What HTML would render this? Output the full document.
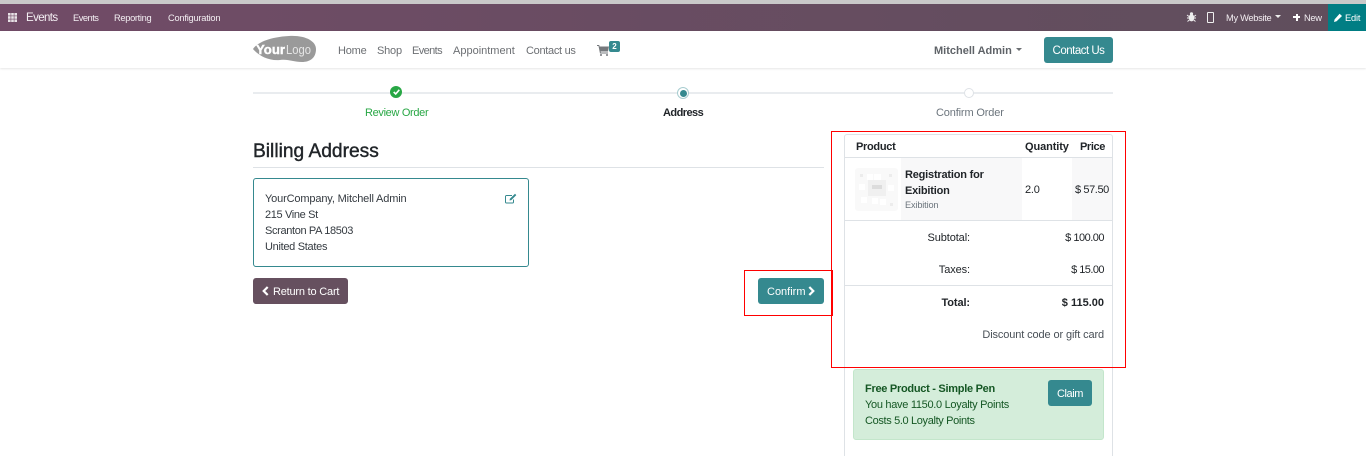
<!DOCTYPE html>
<html><head><meta charset="utf-8"><title>Billing Address</title>
<style>
html,body{margin:0;padding:0;background:#fff;height:456px;overflow:hidden}
body{width:1366px;position:relative;font-family:"Liberation Sans",sans-serif;font-size:11px;color:#212529}
.a{position:absolute;white-space:nowrap}
.t{position:absolute;white-space:nowrap;line-height:16px;height:16px;margin-top:1px}
.r{text-align:right}
.btn{position:absolute;border-radius:3px;color:#fff;text-align:center;box-sizing:border-box}
svg{position:absolute;overflow:visible}
</style></head><body>
<div class="a" style="left:0;top:0;width:1366px;height:4px;background:#c9c9c9"></div>
<div class="a" style="left:0;top:4px;width:1366px;height:27px;background:linear-gradient(90deg,#714b67,#5f4e5c)"></div>
<svg style="left:8px;top:13px" width="10" height="10" viewBox="0 0 10 10" fill="#e8e2e6"><rect width="2.6" height="2.6"/><rect x="3.2" width="2.6" height="2.6"/><rect x="6.4" width="2.6" height="2.6"/><rect y="3.2" width="2.6" height="2.6"/><rect x="3.2" y="3.2" width="2.6" height="2.6"/><rect x="6.4" y="3.2" width="2.6" height="2.6"/><rect y="6.4" width="2.6" height="2.6"/><rect x="3.2" y="6.4" width="2.6" height="2.6"/><rect x="6.4" y="6.4" width="2.6" height="2.6"/></svg>
<div class="t" style="left:26px;top:9px;color:#f3eef2;font-size:11.5px;letter-spacing:-.6px">Events</div>
<div class="t" style="left:73px;top:9px;color:#f3eef2;font-size:9.3px;letter-spacing:-.5px">Events</div>
<div class="t" style="left:114px;top:9px;color:#f3eef2;font-size:9.3px;letter-spacing:-.33px">Reporting</div>
<div class="t" style="left:168px;top:9px;color:#f3eef2;font-size:9.3px;letter-spacing:-.23px">Configuration</div>
<svg style="left:1187px;top:12px" width="9" height="10" viewBox="0 0 9 10" fill="#eee"><ellipse cx="4.5" cy="5.8" rx="2.8" ry="3.6"/><circle cx="4.5" cy="1.8" r="1.6"/><path d="M0 3l2 1.5M9 3L7 4.5M0 6h2M9 6H7M.5 9.5L2.3 8M8.5 9.5L6.7 8" stroke="#eee" fill="none"/></svg>
<div class="a" style="left:1207px;top:12px;width:7px;height:11px;box-sizing:border-box;border:1.4px solid #eee;border-radius:1px"></div>
<div class="t" style="left:1226px;top:9px;color:#f3eef2;font-size:9.3px;letter-spacing:-.3px">My Website</div>
<div class="a" style="left:1275px;top:15px;border:3px solid transparent;border-top:3.5px solid #eee;border-bottom:0"></div>
<div class="a" style="left:1293px;top:16px;width:7px;height:2px;background:#fff"></div>
<div class="a" style="left:1295.5px;top:13.5px;width:2px;height:7px;background:#fff"></div>
<div class="t" style="left:1304px;top:9px;color:#f3eef2;font-size:9.3px;letter-spacing:-.3px">New</div>
<div class="a" style="left:1328px;top:4px;width:38px;height:27px;background:#017e84"></div>
<svg style="left:1334px;top:13px" width="8" height="9" viewBox="0 0 8 9"><path d="M0 9l.6-2.6L5.6.8 8 3 2.6 8.2z" fill="#fff"/></svg>
<div class="t" style="left:1345px;top:9px;color:#fff;font-size:9.3px;letter-spacing:-.2px">Edit</div>

<div class="a" style="left:0;top:31px;width:1366px;height:37px;background:#fff;box-shadow:0 1px 2px rgba(0,0,0,.1)"></div>
<svg style="left:253px;top:36px" width="64" height="28" viewBox="0 0 64 28"><path d="M0 13C4 7 16 1 36 0c16-1 27 5 27 13 0 9-6 13-14 13-9 0-13-3-22-2C16 25 6 20 0 13z" fill="#9a9a9a"/><text x="3" y="18" font-family="Liberation Sans" font-weight="bold" font-size="12.5" fill="#fff" stroke="#fff" stroke-width=".4" textLength="29" lengthAdjust="spacingAndGlyphs">Your</text><text x="33" y="18" font-family="Liberation Sans" font-size="13" fill="#e6e6e6" textLength="25" lengthAdjust="spacingAndGlyphs">Logo</text></svg>
<div class="t" style="left:338px;top:42px;color:#6c6f73;letter-spacing:-.2px">Home</div>
<div class="t" style="left:377px;top:42px;color:#6c6f73;letter-spacing:-.2px">Shop</div>
<div class="t" style="left:412px;top:42px;color:#6c6f73;letter-spacing:-.6px">Events</div>
<div class="t" style="left:453px;top:42px;color:#6c6f73">Appointment</div>
<div class="t" style="left:526px;top:42px;color:#6c6f73;letter-spacing:-.3px">Contact us</div>
<svg style="left:597px;top:45px" width="12" height="11" viewBox="0 0 12 11" fill="#75787c"><path d="M0 0h2.2l.4 1.5H12l-1 5H3.6l.2 1H11v1H3L1.5 1H0z"/><circle cx="4" cy="10" r="1"/><circle cx="10" cy="10" r="1"/></svg>
<div class="a" style="left:609px;top:41px;width:11px;height:11px;background:#35898f;border-radius:2px;color:#fff;font-size:8px;font-weight:bold;text-align:center;line-height:11px">2</div>
<div class="t" style="left:934px;top:42px;color:#5f6368;font-weight:bold">Mitchell Admin</div>
<div class="a" style="left:1016px;top:48px;border:3px solid transparent;border-top:3.5px solid #6c6f73;border-bottom:0"></div>
<div class="btn" style="left:1044px;top:37px;width:69px;height:26px;background:#35898f;line-height:28px;font-size:11.5px;letter-spacing:-.5px">Contact Us</div>

<div class="a" style="left:253px;top:92px;width:860px;height:2px;background:#e9ecef"></div>
<div class="a" style="left:390px;top:86px;width:12px;height:12px;border-radius:50%;background:#28a745"></div>
<svg style="left:392.5px;top:89px" width="7" height="6" viewBox="0 0 7 6"><path d="M.7 3l2 2L6.3.8" fill="none" stroke="#fff" stroke-width="1.6"/></svg>
<div class="a" style="left:677px;top:87px;width:10px;height:10px;border-radius:50%;background:#fff;border:1px solid #a8cdd0"></div>
<div class="a" style="left:679.5px;top:89.5px;width:7px;height:7px;border-radius:50%;background:#35898f"></div>
<div class="a" style="left:964px;top:88px;width:8px;height:8px;border-radius:50%;background:#fff;border:1px solid #dee2e6"></div>
<div class="t" style="left:365px;top:104px;color:#28a745;letter-spacing:-.33px">Review Order</div>
<div class="t" style="left:663px;top:104px;color:#212529;font-weight:bold;letter-spacing:-.55px">Address</div>
<div class="t" style="left:936px;top:104px;color:#6c757d;letter-spacing:-.15px">Confirm Order</div>

<div class="a" style="left:253px;top:140px;font-size:19.2px;line-height:24px;color:#212529;-webkit-text-stroke:.4px #212529">Billing Address</div>
<div class="a" style="left:253px;top:167px;width:571px;height:1px;background:#dee2e6"></div>
<div class="a" style="left:253px;top:178px;width:276px;height:89px;box-sizing:border-box;border:1px solid #35898f;border-radius:3px"></div>
<div class="t" style="left:265px;top:190px;color:#343a40;letter-spacing:-.15px">YourCompany, Mitchell Admin</div>
<div class="t" style="left:265px;top:206px;color:#343a40;letter-spacing:-.35px">215 Vine St</div>
<div class="t" style="left:265px;top:222px;color:#343a40;letter-spacing:-.35px">Scranton PA 18503</div>
<div class="t" style="left:265px;top:238px;color:#343a40;letter-spacing:-.3px">United States</div>
<svg style="left:505px;top:193px" width="12" height="11" viewBox="0 0 12 11" fill="none" stroke="#35898f" stroke-width="1"><path d="M8.5 6.5V9a1 1 0 0 1-1 1H1.5a1 1 0 0 1-1-1V3.5a1 1 0 0 1 1-1H7"/><path d="M4.5 7.5l.4-1.8L10 .8l1.3 1.3-5 5z" fill="#35898f" stroke="none"/></svg>
<div class="btn" style="left:253px;top:278px;width:95px;height:26px;background:#66505f;line-height:26px"><svg style="left:9px;top:8px" width="7" height="10" viewBox="0 0 7 10"><path d="M5.7 1L1.7 5l4 4" fill="none" stroke="#fff" stroke-width="2.2"/></svg><span class="t" style="left:20px;top:5px;letter-spacing:-.2px">Return to Cart</span></div>
<div class="btn" style="left:758px;top:278px;width:66px;height:26px;background:#35898f;line-height:26px"><span class="t" style="left:9px;top:5px">Confirm</span><svg style="left:50px;top:8px" width="7" height="10" viewBox="0 0 7 10"><path d="M1.3 1l4 4-4 4" fill="none" stroke="#fff" stroke-width="2.2"/></svg></div>

<div class="a" style="left:844px;top:134px;width:269px;height:322px;box-sizing:border-box;border:1px solid #dee2e6;border-bottom:0;border-radius:3px 3px 0 0"></div>
<div class="a" style="left:845px;top:157px;width:267px;height:1px;background:#dee2e6"></div>
<div class="a" style="left:901px;top:158px;width:121px;height:62px;background:#f8f8f9"></div>
<div class="a" style="left:1072px;top:158px;width:40px;height:62px;background:#f8f8f9"></div>
<div class="a" style="left:845px;top:220px;width:267px;height:1px;background:#dee2e6"></div>
<div class="a" style="left:845px;top:285px;width:267px;height:1px;background:#dee2e6"></div>
<div class="a" style="left:855px;top:168px;width:43px;height:43px;background:#f9f9f9;border-radius:3px"></div>
<svg style="left:855px;top:168px" width="43" height="43" viewBox="0 0 43 43"><rect x="13" y="12" width="18" height="16" fill="#f0f0f0"/><rect x="17" y="17" width="10" height="4" fill="#dcdcdc"/><g fill="#fff"><rect x="12" y="6" width="6" height="6"/><rect x="19" y="6" width="7" height="6"/><rect x="4" y="16" width="6" height="6"/><rect x="33" y="17" width="6" height="6"/><rect x="6" y="29" width="6" height="6"/><rect x="17" y="30" width="6" height="6"/><rect x="25" y="31" width="6" height="6"/></g><g fill="#ececec"><rect x="5" y="6" width="3" height="3"/><rect x="34" y="6" width="3" height="3"/><rect x="35" y="35" width="3" height="3"/></g></svg>
<div class="t" style="left:856px;top:138px;font-weight:bold;letter-spacing:-.3px">Product</div>
<div class="t" style="left:1025px;top:138px;font-weight:bold;letter-spacing:-.1px">Quantity</div>
<div class="t" style="left:1080px;top:138px;font-weight:bold;letter-spacing:-.4px">Price</div>
<div class="t" style="left:905px;top:166px;font-weight:bold;letter-spacing:-.2px">Registration for</div>
<div class="t" style="left:905px;top:182px;font-weight:bold;letter-spacing:-.2px">Exibition</div>
<div class="t" style="left:905px;top:196px;font-size:9.2px;color:#6c757d;letter-spacing:-.15px">Exibition</div>
<div class="t" style="left:1025px;top:181px;letter-spacing:-.2px">2.0</div>
<div class="t" style="left:1075px;top:181px;letter-spacing:-.4px">$ 57.50</div>
<div class="t r" style="right:396px;top:229px;letter-spacing:-.1px">Subtotal:</div>
<div class="t r" style="right:262px;top:229px;letter-spacing:-.5px">$ 100.00</div>
<div class="t r" style="right:396px;top:261px;letter-spacing:-.1px">Taxes:</div>
<div class="t r" style="right:262px;top:261px;letter-spacing:-.55px">$ 15.00</div>
<div class="t r" style="right:396px;top:294px;font-weight:bold;letter-spacing:-.1px">Total:</div>
<div class="t r" style="right:262px;top:294px;font-weight:bold">$ 115.00</div>
<div class="t r" style="right:262px;top:326px;color:#495057;letter-spacing:-.12px">Discount code or gift card</div>

<div class="a" style="left:853px;top:369px;width:251px;height:71px;box-sizing:border-box;background:#d4edda;border:1px solid #c3e6cb;border-radius:3px"></div>
<div class="t" style="left:865px;top:380px;font-weight:bold;color:#155724;letter-spacing:-.28px">Free Product - Simple Pen</div>
<div class="t" style="left:865px;top:396px;color:#155724;letter-spacing:-.3px">You have 1150.0 Loyalty Points</div>
<div class="t" style="left:865px;top:412px;color:#155724;letter-spacing:-.35px">Costs 5.0 Loyalty Points</div>
<div class="btn" style="left:1048px;top:380px;width:44px;height:26px;background:#35898f;line-height:28px;letter-spacing:-.4px">Claim</div>

<div class="a" style="left:831px;top:131px;width:295px;height:237px;box-sizing:border-box;border:1px solid #f00"></div>
<div class="a" style="left:744px;top:270px;width:89px;height:46px;box-sizing:border-box;border:1px solid #f00"></div>
</body></html>
